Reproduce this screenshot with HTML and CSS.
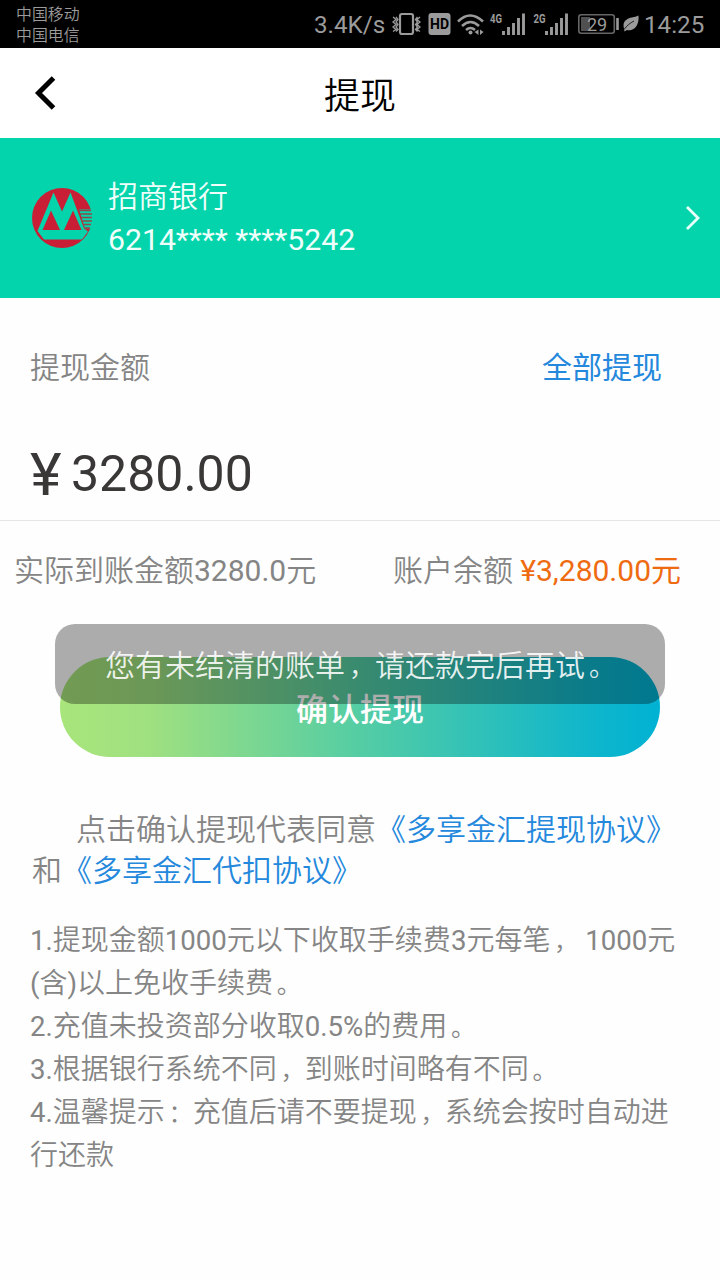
FILE: index.html
```html
<!DOCTYPE html>
<html lang="zh-CN">
<head>
<meta charset="utf-8">
<title>提现</title>
<link rel="stylesheet" href="styles.css">
</head>
<body>
<div class="status">
  <div class="carriers"><span>中国移动</span><span>中国电信</span></div>
  <div class="indicators">
    <span class="speed">3.4K/s</span>
    <svg class="icons" width="252" height="36" viewBox="388 6 252 36">
      <rect x="400" y="14" width="13" height="20" rx="2" fill="none" stroke="#9b9b9b" stroke-width="2.200"/>
      <path d="M393 17l3 2.500-3 2.500 3 2.500-3 2.500 3 2.500-3 2M396 17l2 2.500-2 2.500 2 2.500-2 2.500 2 2.500-2 2M420 17l-3 2.500 3 2.500-3 2.500 3 2.500-3 2.500 3 2M417.500 17l-2 2.500 2 2.500-2 2.500 2 2.500-2 2.500 2 2" fill="none" stroke="#9b9b9b" stroke-width="1.300"/>
      <rect x="428.500" y="13" width="22" height="22" rx="3" fill="#9b9b9b"/>
      <text x="439.500" y="28.500" class="hd">HD</text>
      <g fill="none" stroke="#9b9b9b" stroke-width="2.500">
        <path d="M458 21.500q12-12 25 0M462 26q8.500-8 17 0M466 30q4.500-4 9 0"/>
      </g>
      <circle cx="470.500" cy="32.500" r="2" fill="#9b9b9b"/>
      <path d="M478.500 29.500v5.500l-4-3zM480 29.500v5.500l3.500-3z" fill="#9b9b9b"/>
      <text x="490" y="22.500" class="net" textLength="12" lengthAdjust="spacingAndGlyphs">4G</text>
      <path d="M503.500 31v4M508.500 27v8M513.500 23v12M518.500 18v17M523.500 13.500v21.500" stroke="#9b9b9b" stroke-width="2.900"/>
      <text x="533.500" y="22.500" class="net" textLength="12" lengthAdjust="spacingAndGlyphs">2G</text>
      <path d="M546.500 31v4M551.500 27v8M556.500 23v12M561.500 18v17M566.500 13.500v21.500" stroke="#9b9b9b" stroke-width="2.900"/>
      <rect x="578.800" y="14.800" width="35.500" height="18.500" rx="2.500" fill="none" stroke="#666" stroke-width="1.600"/>
      <rect x="581" y="17" width="9" height="14" fill="#505050"/>
      <text x="597" y="31" class="level">29</text>
      <path d="M617.500 18v12" stroke="#9b9b9b" stroke-width="2.600"/>
      <path d="M624 28.500c-1.500-6 1-8.500 5.500-10.500 3-1 6-1 9-2.500.5 6-1 11-5 13.500-2.500 1.500-5 1.500-6.500 1l-2.500 1.500z" fill="#9b9b9b"/>
      <path d="M624 29.500c3-4 6-6.500 10-8.500" stroke="#000" stroke-width=".8" fill="none"/>
    </svg>
    <span class="clock">14:25</span>
  </div>
</div>
<header class="navbar">
  <svg class="back" width="24" height="36" viewBox="0 0 24 36"><path d="M20.500 3L5.500 18 20.500 33" fill="none" stroke="#000" stroke-width="5"/></svg>
  <h1>提现</h1>
</header>
<section class="bank">
  <svg class="logo" width="60" height="60" viewBox="0 0 60 60">
    <circle cx="30" cy="30" r="30" fill="#c91f36"/>
    <path d="M47 21.500H60V40.500h-7z" fill="#04d4ab"/>
    <path d="M21.500 4.500L5.500 43l6.500 8.500h38l6-8-4-3L38.500 4.500 30 23.500z" fill="#04d4ab"/>
    <path d="M19 22.500L10.500 42H28zM41 22.500L32 42h17.500z" fill="#c91f36"/>
    <path d="M46.500 22.500H59M47.700 26H60M49 29.500H60M50.200 33H60M51.300 36.500H59M52.500 40H58" stroke="#8b4c4c" stroke-width="1.600"/>
  </svg>
  <div class="card"><span>招商银行</span><span class="number">6214**** ****5242</span></div>
  <svg class="next" width="16" height="26" viewBox="0 0 16 26"><path d="M2 2l11 11L2 24" fill="none" stroke="#e9fffa" stroke-width="2.800"/></svg>
</section>
<main>
  <div class="amount-head"><span>提现金额</span><a class="all">全部提现</a></div>
  <div class="amount"><span class="yen">¥</span><span>3280.00</span></div>
  <div class="summary"><span>实际到账金额<span class="num">3280.0</span>元</span><span>账户余额 <b>¥3,280.00元</b></span></div>
  <div class="action">
    <button class="confirm">确认提现</button>
    <div class="toast">您有未结清的账单<i>，</i>请还款完后再试<i>。</i></div>
  </div>
  <p class="agreement"><span class="lead">点击确认提现代表同意</span><a>《多享金汇提现协议》</a><br>和<a>《多享金汇代扣协议》</a></p>
  <div class="notes">
    <p><span class="num">1.</span>提现金额<span class="num">1000</span>元以下收取手续费<span class="num">3</span>元每笔<i>，</i> <span class="num">1000</span>元<br><span class="num">(</span>含<span class="num">)</span>以上免收手续费<i>。</i></p>
    <p><span class="num">2.</span>充值未投资部分收取<span class="num">0.5%</span>的费用<i>。</i></p>
    <p><span class="num">3.</span>根据银行系统不同<i>，</i>到账时间略有不同<i>。</i></p>
    <p><span class="num">4.</span>温馨提示<i>：</i>充值后请不要提现<i>，</i>系统会按时自动进<br>行还款</p>
  </div>
</main>
</body>
</html>
```
FILE: styles.css
```css
* { box-sizing: border-box; }
body {
  margin: 0;
  width: 720px;
  height: 1280px;
  overflow: hidden;
  background: #fefefe;
  color: #858585;
  font: 350 30px/40px Roboto, "Noto Sans CJK SC", sans-serif;
  text-spacing-trim: space-all;
}
h1, p { margin: 0; font-weight: inherit; }
/* full-width punctuation is drawn smaller and sits slightly right in its cell */
i { font-style: normal; font-size: .87em; line-height: 1; padding-left: .15em; }
.status {
  height: 48px;
  padding: 0 16px;
  display: flex;
  justify-content: space-between;
  background: #000;
  color: #9b9b9b;
}
.carriers { display: flex; flex-direction: column; padding-top: 4px; font-size: 15.9px; line-height: 21px; }
.indicators { display: flex; align-items: center; height: 48px; }
.speed { width: 74px; font-size: 24.2px; font-weight: 400; white-space: nowrap; padding-top: 1px; }
.icons { display: block; }
.clock { width: 64px; padding: 1px 0 0 4px; font-size: 24.2px; font-weight: 400; }
.hd { font: 700 14px Roboto, sans-serif; text-anchor: middle; fill: #000; }
.net { font: 700 13px Roboto, sans-serif; fill: #9b9b9b; }
.level { font: 400 18px Roboto, sans-serif; text-anchor: middle; fill: #9b9b9b; }
.navbar {
  height: 90px;
  padding: 0 33px;
  display: grid;
  grid-template-columns: 24px 1fr 24px;
  align-items: center;
  background: #fff;
  color: #000;
}
.navbar h1 { font-size: 36px; line-height: 50px; text-align: center; padding-top: 8px; }
.bank {
  height: 160px;
  padding: 0 19px 0 32px;
  display: flex;
  align-items: center;
  background: #04d4ab;
  color: #effffb;
}
.card { flex: 1; display: flex; flex-direction: column; padding: 0 0 0 16px; line-height: 43px; }
.number { font-weight: 400; font-size: 30.2px; }
.amount-head { display: flex; justify-content: space-between; padding: 50px 58px 0 30px; height: 122px; }
.all { color: #2488dc; font-weight: 400; }
.amount {
  height: 101px;
  padding: 26px 30px 0;
  display: flex;
  border-bottom: 1px solid #e6e6e6;
  color: #3a3737;
  font-size: 50px;
  font-weight: 400;
  line-height: 56px;
}
.yen { width: 41px; font-size: 60px; line-height: 57px; }
.summary { display: flex; justify-content: space-between; padding: 30px 39px 0 14px; height: 103px; }
.summary b { color: #ef6b12; font-weight: 400; }
.num { font-weight: 400; }
.action { position: relative; height: 133px; padding: 33px 60px 0; }
.confirm {
  display: block;
  width: 600px;
  height: 100px;
  padding: 6px 0 0;
  border: 0;
  border-radius: 50px;
  background: linear-gradient(90deg, #a8e57b 0%, #9fe080 15%, #54cda4 50%, #10b6cb 88%, #00b2d3 100%);
  color: #fff;
  font: 500 32px/40px Roboto, "Noto Sans CJK SC", sans-serif;
}
.toast {
  position: absolute;
  left: 55px;
  top: 0;
  width: 610px;
  height: 80px;
  padding: 22px 50px;
  border-radius: 20px;
  background: rgba(0, 0, 0, .32);
  color: rgba(255, 255, 255, .88);
  white-space: nowrap;
}
.agreement { padding: 52px 0 0 32px; line-height: 41px; white-space: nowrap; }
.lead { margin-left: 44px; }
.agreement a { color: #2488dc; }
.notes { padding: 28px 30px 0; font-size: 28px; line-height: 43px; white-space: nowrap; }
.notes .num { font-size: 27.6px; line-height: 1; }
```
